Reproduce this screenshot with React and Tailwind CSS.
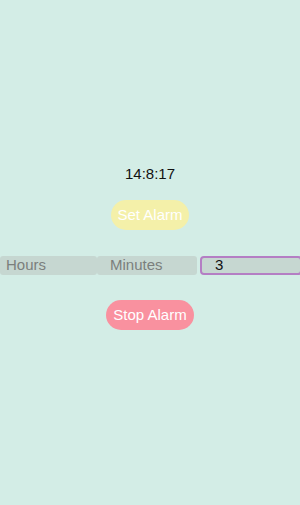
import React, { useState } from 'react';

const App = () => {
  const [seconds, setSeconds] = useState('3');

  return (
    <div className="w-[300px] h-[505px] bg-[#d3ede6] overflow-hidden flex flex-col items-center font-['Liberation_Sans',Arial,sans-serif]">
      <div className="mt-[164px] text-[15px] leading-[20px] text-[#111]">14:8:17</div>
      <button className="mt-[16px] h-[30px] w-[78px] rounded-full bg-[#f4f0a9] text-white text-[15px]">
        Set Alarm
      </button>
      <div className="mt-[26px] flex self-start w-[302px] shrink-0">
        <input
          className="w-[97px] h-[19px] rounded-[3px] bg-[#c6d7d1] pl-[6px] text-[15px] text-[#555] placeholder-[#7b7f7d] outline-none"
          placeholder="Hours"
        />
        <input
          className="w-[100px] h-[19px] rounded-[3px] bg-[#c6d7d1] pl-[13px] text-[15px] text-[#555] placeholder-[#7b7f7d] outline-none"
          placeholder="Minutes"
        />
        <input
          className="ml-[3px] w-[102px] h-[19px] rounded-[4px] bg-[#c6d7d1] border-2 border-[#b47ec4] pl-[13px] text-[15px] text-[#111] outline-none"
          value={seconds}
          onChange={(e) => setSeconds(e.target.value)}
        />
      </div>
      <button className="mt-[25px] h-[30px] w-[88px] rounded-full bg-[#f9919f] text-white text-[15px]">
        Stop Alarm
      </button>
    </div>
  );
};

export default App;
